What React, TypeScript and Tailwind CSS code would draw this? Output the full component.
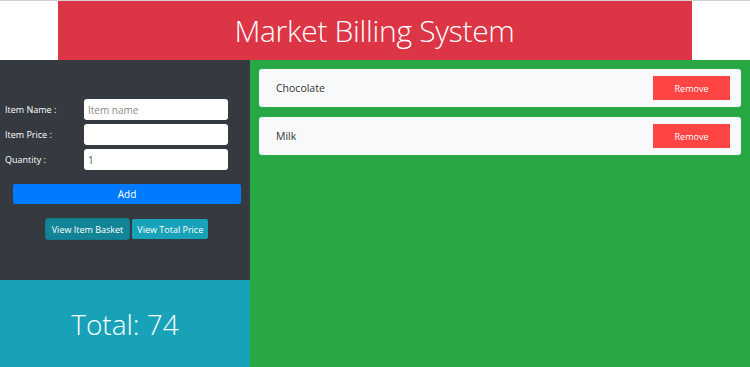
import React from "react";

export default function App() {
  const font = { fontFamily: '"Open Sans", "Noto Sans", sans-serif' };
  return (
    <div className="w-[750px] h-[367px] overflow-hidden bg-white flex flex-col" style={font}>
      <div className="h-[60px] flex justify-center border-t border-[#d0d0d0]">
        <div className="w-[634px] ml-[-1px] bg-[#dc3545] flex items-center justify-center">
          <h1 className="text-[30px] font-light text-white tracking-[-0.3px]">Market Billing System</h1>
        </div>
      </div>
      <div className="flex flex-1">
        <div className="w-[250px] flex flex-col">
          <div className="h-[220px] bg-[#343a40] pt-[39px] flex flex-col">
            <div className="flex flex-col gap-[4px] pl-[5px] pr-[22px]">
              {[
                { l: "Item Name :", p: "Item name", v: "" },
                { l: "Item Price :", p: "", v: "" },
                { l: "Quantity :", p: "", v: "1" },
              ].map((r) => (
                <div key={r.l} className="flex items-center">
                  <span className="w-[79px] text-[9px] text-white">{r.l}</span>
                  <input
                    className="w-[144px] h-[21px] rounded-[3px] bg-white px-[4px] text-[10px] text-[#555] placeholder:text-[#8a8a8a] outline-none"
                    placeholder={r.p}
                    defaultValue={r.v}
                  />
                </div>
              ))}
            </div>
            <div className="flex pl-[13px] pr-[9px] mt-[14px]">
              <button className="w-full h-[20px] rounded-[2px] bg-[#007bff] text-white text-[10px] leading-none">Add</button>
            </div>
            <div className="flex justify-center items-start gap-[2px] mt-[14px] pl-[3px]">
              <button className="h-[22px] px-[6px] rounded-[3px] bg-[#138496] border border-[#117a8b] text-white text-[9px] leading-none">
                View Item Basket
              </button>
              <button className="h-[20px] mt-[1px] px-[5px] rounded-[2px] bg-[#17a2b8] text-white text-[9px] leading-none">
                View Total Price
              </button>
            </div>
          </div>
          <div className="flex-1 bg-[#17a2b8] flex items-center justify-center">
            <span className="text-[28px] font-light text-white">Total: 74</span>
          </div>
        </div>
        <div className="flex-1 bg-[#28a745] px-[9px] pt-[9px] flex flex-col gap-[10px]">
          {["Chocolate", "Milk"].map((n) => (
            <div key={n} className="h-[38px] bg-[#f8f9fa] rounded-[3px] flex items-center justify-between pl-[17px] pr-[11px]">
              <span className="text-[10.5px] text-[#333] mt-[2px]">{n}</span>
              <button className="w-[77px] h-[24px] bg-[#ff4444] text-white text-[9px] leading-none">Remove</button>
            </div>
          ))}
        </div>
      </div>
    </div>
  );
}
